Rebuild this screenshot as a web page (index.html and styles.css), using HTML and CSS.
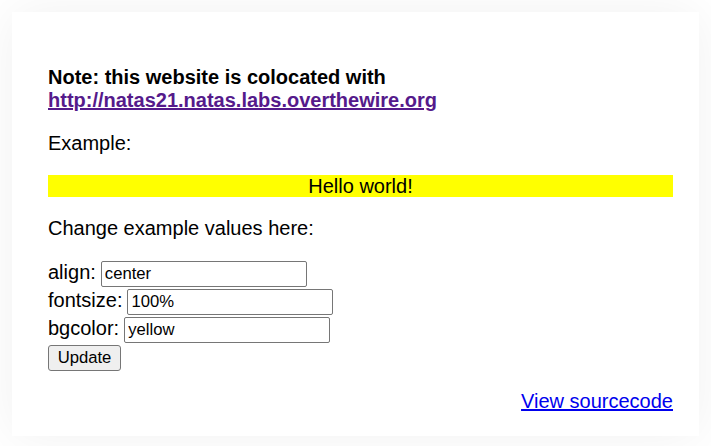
FILE: index.html
```html
<!DOCTYPE html>
<html>
<head>
<meta charset="utf-8">
<link rel="stylesheet" href="styles.css">
</head>
<body>
<div class="content">
  <p class="note"><b>Note: this website is colocated with <a class="colink" href="#">http://natas21.natas.labs.overthewire.org</a></b></p>
  <p>Example:</p>
  <div class="example">Hello world!</div>
  <p>Change example values here:</p>
  <form class="form">
    <div class="row">align: <input class="field" type="text" value="center"></div>
    <div class="row">fontsize: <input class="field" type="text" value="100%"></div>
    <div class="row">bgcolor: <input class="field" type="text" value="yellow"></div>
    <div class="row last"><button class="btn" type="button">Update</button></div>
  </form>
  <div class="viewsource"><a href="#">View sourcecode</a></div>
</div>
</body>
</html>
```

FILE: styles.css
```css
html, body {
  margin: 0;
  padding: 0;
  background: #ffffff;
}
body {
  font-family: "Liberation Sans", Arial, sans-serif;
  font-size: 20px;
  color: #000;
  height: 446px;
  overflow: hidden;
}
.content {
  margin: 12px;
  padding: 34px 26px 20px 36px;
  background: #fff;
  box-shadow: 0 0 48px rgba(0,0,0,0.06);
  height: 370px;
}
p {
  margin: 20px 0;
}
a {
  color: #0000ee;
}
.colink {
  color: #551a8b;
}
.example {
  background: yellow;
  text-align: center;
  height: 22px;
  line-height: 22px;
}
.form {
  margin: 0;
  padding-top: 1px;
}
.row {
  display: flex;
  align-items: baseline;
  gap: 5px;
  height: 28px;
}
.row.last {
  height: 27px;
}
.field {
  width: 206px;
  height: 26px;
  box-sizing: border-box;
  font-family: "Liberation Sans", Arial, sans-serif;
  font-size: 16.67px;
  padding: 1px 3px;
  border: 1px solid #767676;
  border-radius: 2px;
  color: #000;
}
.btn {
  font-family: "Liberation Sans", Arial, sans-serif;
  font-size: 16.67px;
  width: 73px;
  height: 26px;
  border: 1px solid #767676;
  border-radius: 3px;
  background: #efefef;
  color: #000;
  padding: 0;
}
.viewsource {
  text-align: right;
  margin-top: 18px;
}
```
